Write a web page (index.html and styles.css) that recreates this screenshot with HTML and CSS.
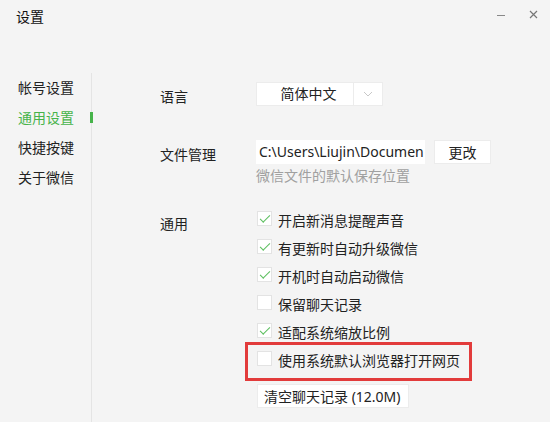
FILE: index.html
```html
<!DOCTYPE html>
<html lang="zh-CN">
<head>
  <meta charset="UTF-8">
  <title>设置</title>
  <link rel="stylesheet" href="styles.css">
</head>
<body>

  <div class="window">
    <header class="titlebar">
      <span class="title">设置</span>
      <div class="win-controls">
        <span class="win-btn win-min"></span>
        <span class="win-btn win-close">
          <svg width="9" height="9" viewBox="0 0 9 9"><path d="M1 1 L8 8 M8 1 L1 8" stroke="#777" stroke-width="1.2" fill="none"/></svg>
        </span>
      </div>
    </header>

    <div class="main">
      <nav class="sidebar">
        <div class="nav-item">帐号设置</div>
        <div class="nav-item active">通用设置</div>
        <div class="nav-item">快捷按键</div>
        <div class="nav-item">关于微信</div>
      </nav>

      <section class="content">
        <div class="row row-lang">
          <div class="label">语言</div>
          <div class="select">
            <span class="select-value">简体中文</span>
            <span class="select-arrow">
              <svg width="10" height="6" viewBox="0 0 10 6"><path d="M1 1 L5 5 L9 1" stroke="#c8c8c8" stroke-width="1" fill="none"/></svg>
            </span>
          </div>
        </div>

        <div class="row row-file">
          <div class="label">文件管理</div>
          <div class="control">
            <div class="file-line">
              <div class="path-box">C:\Users\Liujin\Documen</div>
              <button class="btn btn-change">更改</button>
            </div>
            <div class="hint">微信文件的默认保存位置</div>
          </div>
        </div>

        <div class="row row-general">
          <div class="label">通用</div>
          <div class="control">
            <label class="check-row"><span class="check checked"></span>开启新消息提醒声音</label>
            <label class="check-row"><span class="check checked"></span>有更新时自动升级微信</label>
            <label class="check-row"><span class="check checked"></span>开机时自动启动微信</label>
            <label class="check-row"><span class="check"></span>保留聊天记录</label>
            <label class="check-row"><span class="check checked"></span>适配系统缩放比例</label>
            <label class="check-row highlighted"><span class="check"></span>使用系统默认浏览器打开网页</label>
            <button class="btn btn-clear">清空聊天记录 (12.0M)</button>
          </div>
        </div>
      </section>
    </div>
  </div>

</body>
</html>
```

FILE: styles.css
```css
body {
  margin: 0;
  background: #f4f4f4;
  font-family: "Noto Sans", "Noto Sans CJK SC", sans-serif;
  font-size: 14px;
  color: #222;
}

.window {
  width: 550px;
  height: 422px;
  overflow: hidden;
}

.titlebar {
  height: 73px;
  display: flex;
  justify-content: space-between;
  align-items: flex-start;
  box-sizing: border-box;
  padding: 6px 12px 0 16px;
}

.title {
  font-size: 14px;
  line-height: 22px;
  color: #111;
}

.win-controls {
  display: flex;
  align-items: center;
  gap: 22px;
  padding-top: 2px;
}

.win-btn {
  display: flex;
  align-items: center;
  justify-content: center;
  width: 10px;
  height: 12px;
}

.win-min::before {
  content: "";
  width: 8px;
  height: 1px;
  background: #888;
  margin-top: 3px;
}

.main {
  display: flex;
  height: 349px;
}

.sidebar {
  width: 91px;
  flex-shrink: 0;
  border-right: 1px solid #e4e4e4;
}

.nav-item {
  position: relative;
  height: 30px;
  line-height: 30px;
  padding-left: 18px;
  color: #222;
}

.nav-item.active {
  color: #46b34a;
}

.nav-item.active::after {
  content: "";
  position: absolute;
  right: -2px;
  top: 9px;
  width: 3px;
  height: 11px;
  background: #46b34a;
}

.content {
  flex: 1;
  padding: 9px 0 0 68px;
}

.row {
  display: flex;
}

.label {
  width: 96px;
  flex-shrink: 0;
  color: #222;
}

.row-lang .label {
  line-height: 24px;
  padding-top: 3px;
}

.select {
  display: flex;
  height: 24px;
  background: #fff;
  border: 1px solid #ececec;
  box-sizing: border-box;
}

.select-value {
  width: 97px;
  padding-left: 7px;
  box-sizing: border-box;
  text-align: center;
  line-height: 22px;
  border-right: 1px solid #ececec;
}

.select-arrow {
  width: 28px;
  display: flex;
  align-items: center;
  justify-content: center;
}

.row-file {
  margin-top: 31px;
}

.row-file .label {
  line-height: 24px;
  padding-top: 3px;
}

.file-line {
  display: flex;
  gap: 9px;
}

.path-box {
  width: 169px;
  height: 24px;
  line-height: 24px;
  padding-left: 3px;
  box-sizing: border-box;
  background: #fff;
  white-space: nowrap;
  overflow: hidden;
  font-size: 14px;
}

.btn {
  font-family: inherit;
  font-size: 14px;
  color: #222;
  background: #fff;
  border: 1px solid #ececec;
  height: 24px;
  padding: 0;
  cursor: pointer;
}

.btn-change {
  width: 57px;
}

.hint {
  margin-top: 2px;
  line-height: 20px;
  color: #a0a0a0;
}

.row-general {
  margin-top: 20px;
}

.row-general .label {
  line-height: 28px;
  padding-top: 4px;
}

.check-row {
  position: relative;
  display: flex;
  align-items: center;
  height: 28px;
  gap: 6px;
  margin-left: 1px;
}

.check {
  width: 15px;
  height: 15px;
  box-sizing: border-box;
  background: #fff;
  border: 1px solid #e3e3e3;
  margin-top: -3px;
  display: flex;
  align-items: center;
  justify-content: center;
}

.check.checked::after {
  content: "";
  width: 9px;
  height: 4px;
  border-left: 1px solid #5cbf5f;
  border-bottom: 1px solid #5cbf5f;
  transform: rotate(-45deg);
  margin-top: -3px;
}

.highlighted::before {
  content: "";
  position: absolute;
  left: -12px;
  top: -4px;
  width: 227px;
  height: 39px;
  box-sizing: border-box;
  border: 3px solid #e23b3b;
}

.btn-clear {
  margin-top: 10px;
  margin-left: 1px;
  width: 152px;
  text-align: left;
  padding-left: 6px;
}
```
